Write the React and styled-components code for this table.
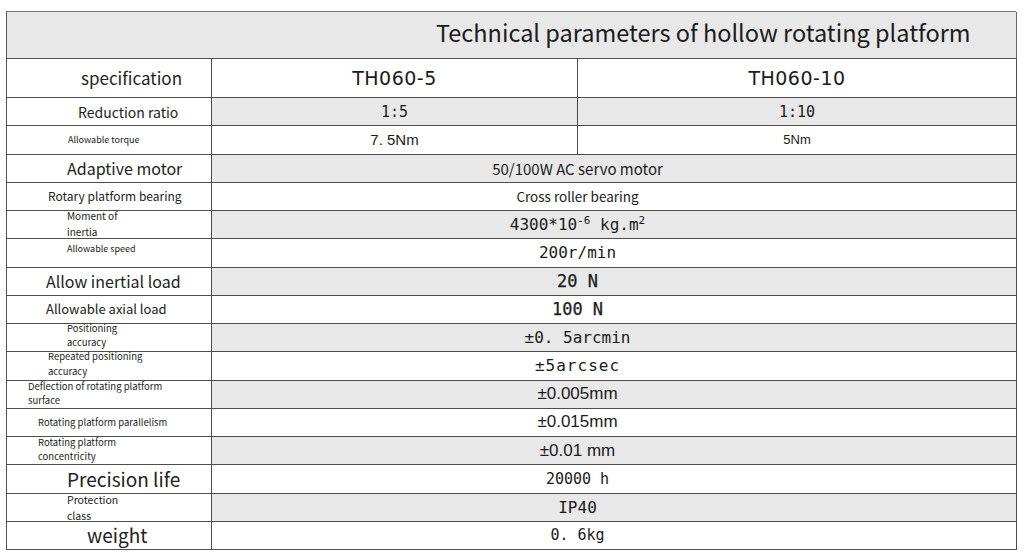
import React from 'react'
import styled, { createGlobalStyle } from 'styled-components'

const GlobalStyle = createGlobalStyle`
  html, body {
    margin: 0;
    padding: 0;
    background: #fff;
  }
  body {
    font-family: "Noto Sans", "Noto Sans CJK SC", sans-serif;
    color: #1b1b1b;
  }
`

const SANS = `"Noto Sans CJK SC", "Noto Sans", sans-serif`
const HEI = `"DejaVu Sans", "Noto Sans", sans-serif`
const NARROW = `"Liberation Sans", Arial, sans-serif`
const MONO = `"DejaVu Sans Mono", "Liberation Mono", monospace`

const rows = [
  { label: 'Reduction ratio', size: 14, indent: 71, values: ['1:5', '1:10'], font: MONO, vsize: 15 },
  { label: 'Allowable torque', size: 9, indent: 61, values: ['7. 5Nm', '5Nm'], font: NARROW, vsize: 15, vsize2: 13 },
  { label: 'Adaptive motor', size: 16, indent: 60, span: '50/100W AC servo motor', font: SANS, vsize: 15 },
  { label: 'Rotary platform bearing', size: 12, indent: 41, span: 'Cross roller bearing', font: SANS, vsize: 13.5 },
  { label: ['Moment of', 'inertia'], size: 10, lh: 16, shift: -3, indent: 60, span: 'inertia', font: MONO, vsize: 16 },
  { label: 'Allowable speed', size: 9, indent: 60, top: true, span: '200r/min', font: MONO, vsize: 16 },
  { label: 'Allow inertial load', size: 16, indent: 39, span: '20 N', font: MONO, vsize: 17, bold: true },
  { label: 'Allowable axial load', size: 13, indent: 39, span: '100 N', font: MONO, vsize: 17, bold: true },
  { label: ['Positioning', 'accuracy'], size: 9.5, lh: 14, shift: -3, indent: 60, span: '±0. 5arcmin', font: MONO, vsize: 16 },
  { label: ['Repeated positioning', 'accuracy'], size: 9.5, lh: 15, shift: -3, indent: 41, span: '±5arcsec', font: MONO, vsize: 16, spaced: true },
  { label: ['Deflection of rotating platform', 'surface'], size: 9.5, lh: 14, shift: -2, indent: 21, span: '±0.005mm', font: NARROW, vsize: 17 },
  { label: 'Rotating platform parallelism', size: 9.5, indent: 31, span: '±0.015mm', font: NARROW, vsize: 17 },
  { label: ['Rotating platform', 'concentricity'], size: 9.5, lh: 14, shift: -2, indent: 31, span: '±0.01 mm', font: NARROW, vsize: 17 },
  { label: 'Precision life', size: 19, indent: 60, span: '20000 h', font: MONO, vsize: 15 },
  { label: ['Protection', 'class'], size: 10.5, lh: 16, shift: -2, indent: 60, span: 'IP40', font: MONO, vsize: 16 },
  { label: 'weight', size: 19, indent: 80, span: '0. 6kg', font: MONO, vsize: 15 },
]

const Page = styled.div`
  padding: 11px 8px 10px 6px;
`

const Table = styled.div`
  display: grid;
  grid-template-columns: 205px 366px 439px;
  grid-template-rows: 47px 39px repeat(16, 28.25px);
  width: 1010px;
  border-top: 1px solid #777;
  border-left: 1px solid #555;
  box-sizing: border-box;
`

const Cell = styled.div`
  box-sizing: border-box;
  border-right: 1px solid #4d4d4d;
  border-bottom: 1px solid #4d4d4d;
  display: flex;
  align-items: center;
  overflow: visible;
  white-space: nowrap;
  min-width: 0;
`

const Title = styled(Cell)`
  grid-column: 1 / -1;
  background: #e8e8e8;
  padding-left: 429px;
  padding-bottom: 6px;
  font-family: ${SANS};
  font-size: 23.5px;
  border-right-color: #666;
  border-bottom-color: #555;
`

const LabelCell = styled(Cell)`
  background: #fff;
  padding-left: ${p => p.$indent}px;
  font-family: ${SANS};
  font-size: ${p => p.$size}px;
  line-height: ${p => p.$lh || 18}px;
  align-items: ${p => (p.$top ? 'flex-start' : 'center')};
  flex-direction: ${p => (p.$stack ? 'column' : 'row')};
  padding-top: ${p => (p.$top && !p.$stack ? 1 : 0)}px;
  color: #222;
`

const LabelLine = styled.span`
  display: block;
  position: relative;
  top: ${p => p.$shift || 0}px;
`

const ValueCell = styled(Cell)`
  background: ${p => (p.$shade ? '#e8e8e8' : '#fff')};
  grid-column: ${p => (p.$span ? '2 / 4' : 'auto')};
  justify-content: center;
  padding-right: ${p => (p.$span ? 73 : 0)}px;
  font-family: ${p => p.$font};
  font-size: ${p => p.$size}px;
  -webkit-text-stroke: ${p => (p.$bold ? '0.25px #1b1b1b' : '0')};
  letter-spacing: ${p => (p.$spaced ? '1px' : '0')};
  color: #1b1b1b;
`

const Model = styled(ValueCell)`
  font-family: ${HEI};
  font-size: 19px;
  letter-spacing: 0.5px;
`

const Sup = styled.sup`
  font-size: 11px;
  vertical-align: 6px;
  line-height: 0;
`

const Inertia = () => (
  <span>
    4300*10<Sup>-6</Sup> kg.m<Sup>2</Sup>
  </span>
)

const SpecRow = () => (
  <>
    <LabelCell $indent={74} $size={17}>specification</LabelCell>
    <Model>TH060-5</Model>
    <Model>TH060-10</Model>
  </>
)

const ParamRow = ({ row, shade }) => {
  const stacked = Array.isArray(row.label)
  return (
    <>
      <LabelCell
        $indent={row.indent}
        $size={row.size}
        $lh={row.lh}
        $top={stacked || row.top}
        $stack={stacked}
      >
        {stacked
          ? row.label.map(l => <LabelLine key={l} $shift={row.shift}>{l}</LabelLine>)
          : row.label}
      </LabelCell>
      {row.span ? (
        <ValueCell $span $shade={shade} $font={row.font} $size={row.vsize} $bold={row.bold} $spaced={row.spaced}>
          {row.span === 'inertia' ? <Inertia /> : row.span}
        </ValueCell>
      ) : (
        <>
          <ValueCell $shade={shade} $font={row.font} $size={row.vsize}>{row.values[0]}</ValueCell>
          <ValueCell $shade={shade} $font={row.font} $size={row.vsize2 || row.vsize}>{row.values[1]}</ValueCell>
        </>
      )}
    </>
  )
}

const App = () => (
  <Page>
    <GlobalStyle />
    <Table>
      <Title>Technical parameters of hollow rotating platform</Title>
      <SpecRow />
      {rows.map((row, i) => (
        <ParamRow key={i} row={row} shade={i % 2 === 0} />
      ))}
    </Table>
  </Page>
)

export default App
